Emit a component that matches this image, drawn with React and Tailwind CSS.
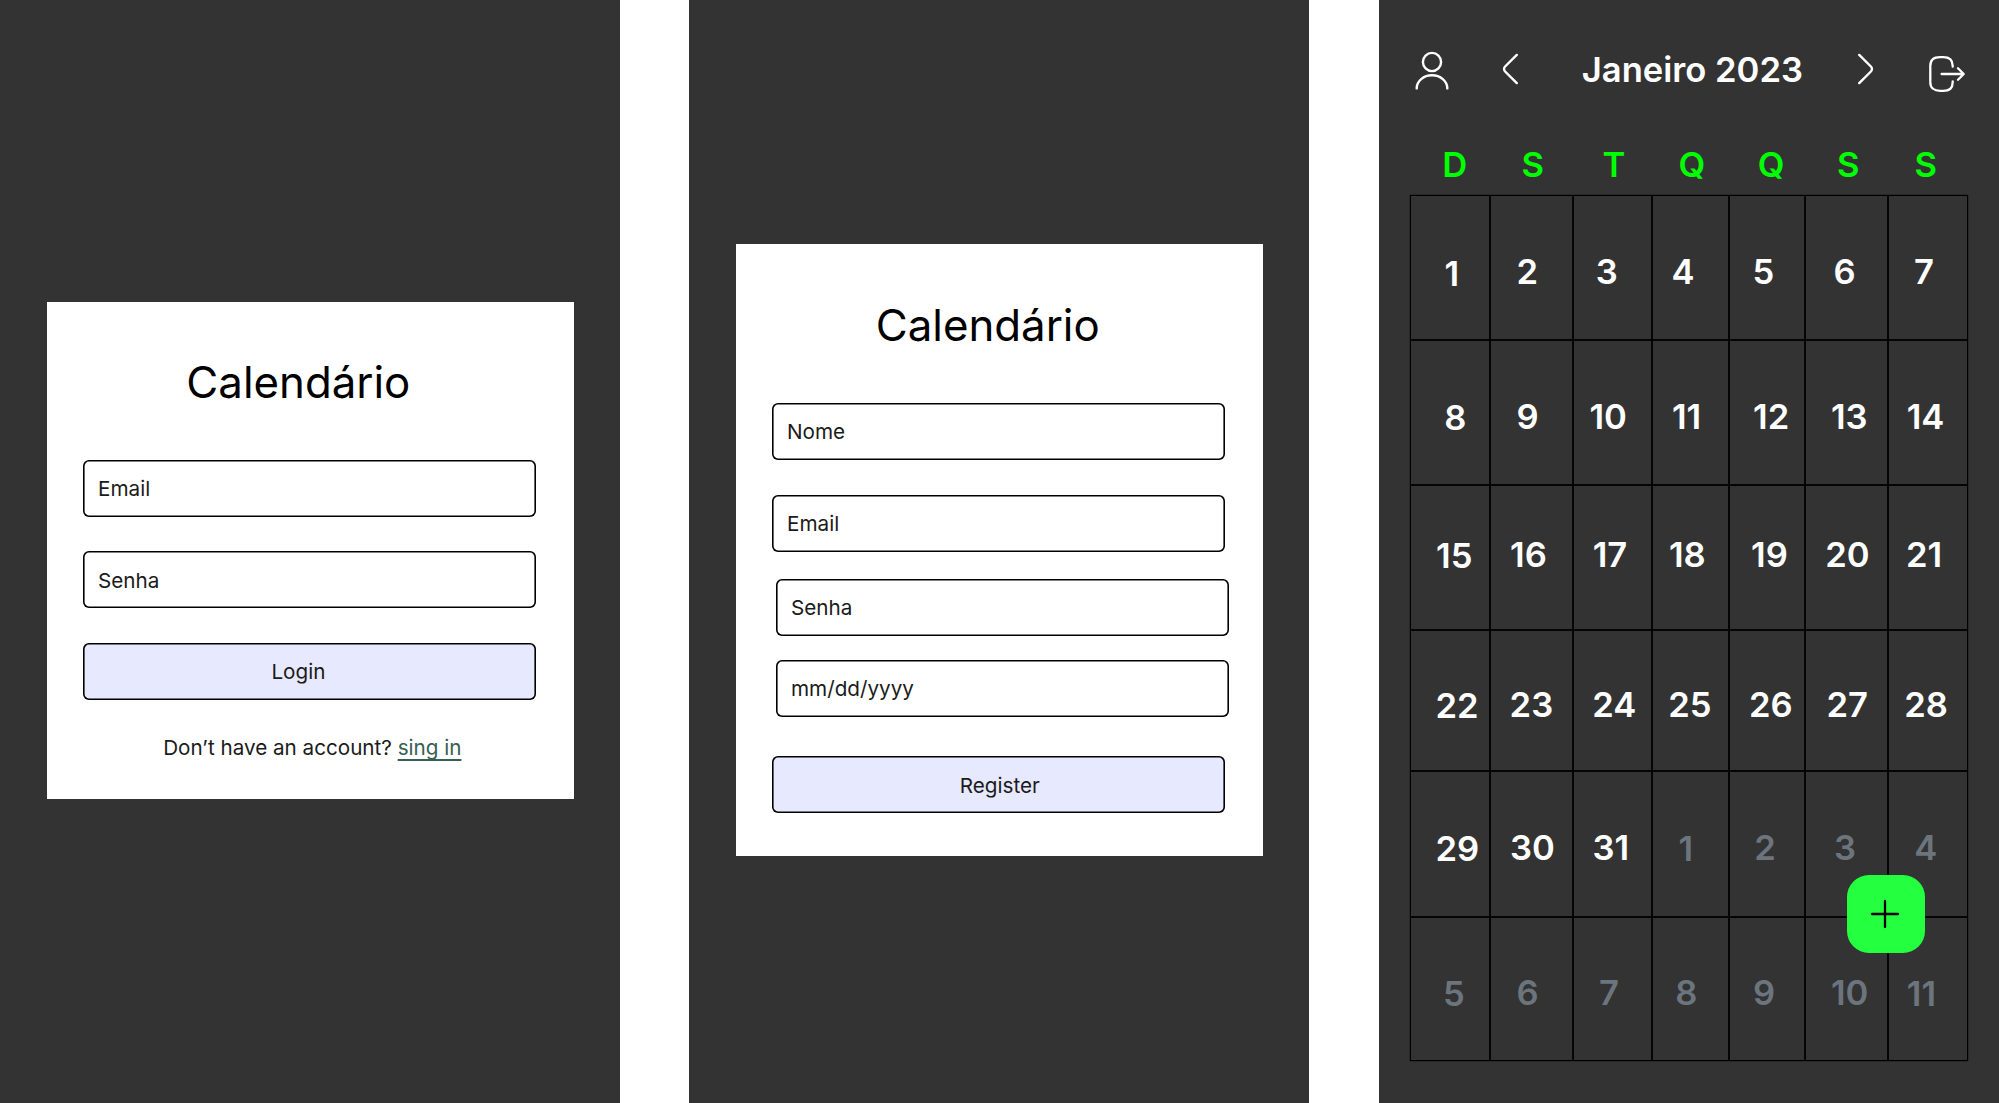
import React from "react";

const WEEKDAYS = [
  ["D", 31.2], ["S", 31.5], ["T", 29.6], ["Q", 26.4], ["Q", 28.7], ["S", 31.9], ["S", 26.5],
];

// Each week: text offset from the top of the row for the first day and for the others,
// then [label, left inset, belongs to the next month, own top offset]
const WEEKS = [
  { first: 56, rest: 54, days: [["1", 33.6], ["2", 26.4], ["3", 22.8], ["4", 19.6], ["5", 23.6], ["6", 28.6], ["7", 26.1]] },
  { first: 56, rest: 55, days: [["8", 33.2], ["9", 26.4], ["10", 16.5], ["11", 19.9], ["12", 24.1], ["13", 26], ["14", 18.7]] },
  { first: 49, rest: 48, days: [["15", 25.1], ["16", 20.1], ["17", 19.7], ["18", 16.9], ["19", 22.1], ["20", 20.2], ["21", 18]] },
  { first: 54, rest: 53, days: [["22", 24.4], ["23", 19.6], ["24", 19.2], ["25", 16.3], ["26", 20], ["27", 21.5], ["28", 16.2]] },
  { first: 56, rest: 55, days: [["29", 24.4], ["30", 20], ["31", 19.5], ["1", 26.6, true, 56], ["2", 25.3, true], ["3", 28.9, true], ["4", 26.3, true]] },
  { first: 55, rest: 54, days: [["5", 31.9, true], ["6", 26.4, true], ["7", 25.9, true], ["8", 23.2, true], ["9", 23.9, true], ["10", 26, true], ["11", 18.8, true, 55]] },
];

const COLUMNS = "grid-cols-[79px_83px_79px_77px_76px_83px_79px]";

function Field({ children, className = "" }) {
  return (
    <div className={`flex h-[57px] w-[453px] items-center rounded-[6px] pl-[15px] pt-px text-[20.7px] leading-[26px] text-[#1b1b1b] shadow-[inset_0_0_0_1.6px_#000] ${className}`}>
      {children}
    </div>
  );
}

function SubmitButton({ children, className = "" }) {
  return (
    <button type="button" className={`flex h-[57px] w-[453px] items-center rounded-[6px] bg-[#e7e9ff] pt-px text-[20.7px] leading-[26px] text-[#1b1b1b] shadow-[inset_0_0_0_1.6px_#000] ${className}`}>
      {children}
    </button>
  );
}

function LoginScreen() {
  return (
    <section className="h-[1103px] w-[620px] shrink-0 bg-[#333333] pl-[47px] pt-[302px]">
      <form className="flex h-[497px] w-[527px] flex-col bg-white pl-[36px] pt-[54px]">
        <h1 className="pl-[103.3px] text-[43.8px] leading-[54px] text-black">Calendário</h1>
        <Field className="mt-[50px]">Email</Field>
        <Field className="mt-[34px]">
          <span className="pt-px">Senha</span>
        </Field>
        <SubmitButton className="mt-[35px] pl-[188.4px]">Login</SubmitButton>
        <p className="mt-[35px] whitespace-nowrap pl-[80.2px] text-[20.65px] leading-[26px] text-[#1b1b1b]">
          Don’t have an account?{" "}
          <a className="text-[#375f53] underline decoration-[1.5px] underline-offset-[4px] [text-decoration-skip-ink:none]">sing in</a>
        </p>
      </form>
    </section>
  );
}

function RegisterScreen() {
  return (
    <section className="ml-[69px] h-[1103px] w-[620px] shrink-0 bg-[#333333] pl-[47px] pt-[244px]">
      <form className="flex h-[612px] w-[527px] flex-col bg-white pl-[36px] pt-[55px]">
        <h1 className="pl-[103.7px] text-[43.8px] leading-[54px] text-black">Calendário</h1>
        <Field className="mt-[50px]">Nome</Field>
        <Field className="mt-[35px]">Email</Field>
        <Field className="ml-[4px] mt-[27px]">Senha</Field>
        <Field className="ml-[4px] mt-[24px]">mm/dd/yyyy</Field>
        <SubmitButton className="mt-[39px] pl-[187.7px]">
          <span className="pt-px">Register</span>
        </SubmitButton>
      </form>
    </section>
  );
}

function UserIcon() {
  return (
    <svg width="40" height="44" viewBox="0 0 40 44" fill="none" stroke="#fff" strokeWidth="2.4" strokeLinecap="round">
      <circle cx="20" cy="14" r="9.1" />
      <path d="M4.7 40.4C4.7 33 11.6 27.3 20 27.3S35.3 33 35.3 40.4" />
    </svg>
  );
}

function ChevronIcon({ className = "" }) {
  return (
    <svg className={className} width="20" height="34" viewBox="0 0 20 34" fill="none" stroke="#fff" strokeWidth="2.4" strokeLinecap="round" strokeLinejoin="round">
      <path d="M16.8 2.9 5.1 14.5c-1.4 1.4-1.4 3.6 0 5L16.8 31.1" />
    </svg>
  );
}

function LogoutIcon() {
  return (
    <svg width="40" height="40" viewBox="0 0 40 40" fill="none" stroke="#fff" strokeWidth="2.3" strokeLinecap="round" strokeLinejoin="round">
      <path d="M27.7 12.7v-.9C27.7 6 24 3.200 18.200 3.200h-3.100C9.300 3.200 5.300 6 5.300 11.800v16.400C5.300 34 9.300 36.900 15.100 36.900h3.100c5.800 0 9.500-2.900 9.500-8.700v-.9" />
      <path d="M16.600 20h22M33 14.200l5.700 5.800-5.700 5.800" />
    </svg>
  );
}

function CalendarScreen() {
  return (
    <section className="relative ml-[70px] h-[1103px] w-[620px] shrink-0 bg-[#333333] pl-[32px]">
      <header className="flex h-[143px] items-start">
        <div className="ml-px mt-[48px]"><UserIcon /></div>
        <div className="ml-[48px] mt-[52px]"><ChevronIcon /></div>
        <h2 className="ml-[61.8px] mt-[48px] w-[273.8px] whitespace-nowrap text-[34.6px] font-semibold leading-[42px] text-white">Janeiro 2023</h2>
        <div className="mt-[52px]"><ChevronIcon className="-scale-x-100" /></div>
        <div className="ml-[49.4px] mt-[54px]"><LogoutIcon /></div>
      </header>

      <div className={`grid h-[53px] ${COLUMNS}`}>
        {WEEKDAYS.map(([label, inset], i) => (
          <span key={i} className="text-[34.6px] font-semibold leading-[42px] text-[#00ff00]" style={{ paddingLeft: inset }}>
            {label}
          </span>
        ))}
      </div>

      <div className={`grid w-[556px] shadow-[0_0_0_1.2px_#000] ${COLUMNS} grid-rows-[144px_145px_145px_141px_146px_143px]`}>
        {WEEKS.map((week, w) =>
          week.days.map(([label, inset, muted, top], d) => (
            <div
              key={`${w}-${d}`}
              className={`text-[34.6px] font-semibold leading-[42px] shadow-[0_0_0_0.9px_#000] ${muted ? "text-[#6c757d]" : "text-white"}`}
              style={{ paddingLeft: inset, paddingTop: top ?? (d === 0 ? week.first : week.rest) }}
            >
              {label}
            </div>
          ))
        )}
      </div>

      <button type="button" aria-label="Adicionar" className="absolute left-[468.4px] top-[875.3px] flex h-[78px] w-[78px] items-center justify-center rounded-[22px] bg-[#24ff40]">
        <svg className="-ml-[3px]" width="32" height="32" viewBox="0 0 32 32" fill="none" stroke="#000" strokeWidth="2.3" strokeLinecap="round">
          <path d="M3 16h26M16 3v26" />
        </svg>
      </button>
    </section>
  );
}

export default function App() {
  return (
    <main className="flex h-[1103px] w-[1999px] overflow-hidden bg-white font-['Inter',sans-serif]">
      <LoginScreen />
      <RegisterScreen />
      <CalendarScreen />
    </main>
  );
}
